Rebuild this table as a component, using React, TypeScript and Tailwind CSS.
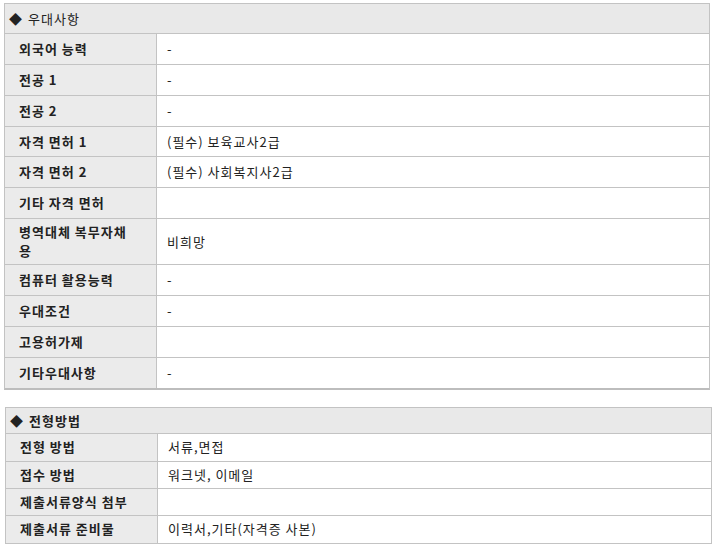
import React from "react";

type Row = { label: React.ReactNode; value: string; h: string };

const prefer: Row[] = [
  { label: "외국어 능력", value: "-", h: "h-[31px]" },
  { label: "전공 1", value: "-", h: "h-[31px]" },
  { label: "전공 2", value: "-", h: "h-[31px]" },
  { label: "자격 면허 1", value: "(필수) 보육교사2급", h: "h-[30px]" },
  { label: "자격 면허 2", value: "(필수) 사회복지사2급", h: "h-[31px]" },
  { label: "기타 자격 면허", value: "", h: "h-[31px]" },
  {
    label: (
      <>
        병역대체 복무자채
        <br />용
      </>
    ),
    value: "비희망",
    h: "h-[46px]",
  },
  { label: "컴퓨터 활용능력", value: "-", h: "h-[31px]" },
  { label: "우대조건", value: "-", h: "h-[31px]" },
  { label: "고용허가제", value: "", h: "h-[31px]" },
  { label: "기타우대사항", value: "-", h: "h-[30px]" },
];

const screening: Row[] = [
  { label: "전형 방법", value: "서류,면접", h: "h-[28px]" },
  { label: "접수 방법", value: "워크넷, 이메일", h: "h-[27px]" },
  { label: "제출서류양식 첨부", value: "", h: "h-[27px]" },
  { label: "제출서류 준비물", value: "이력서,기타(자격증 사본)", h: "h-[27px]" },
];

const App = () => {
  return (
    <div
      className="w-[715px] h-[547px] bg-white text-[13px] leading-[19px] tracking-[1px] text-[#222] overflow-hidden"
      style={{ fontFamily: '"Noto Sans CJK KR", "Noto Sans", sans-serif' }}
    >
      {/* 우대사항 */}
      <div className="pt-[3px] pl-[4px]">
        <div className="w-[706px] border border-[#c3c3c3] border-b-2 border-b-[#bdbdbd]">
          <div className="h-[30px] flex items-center pl-[4px] pb-[1px] bg-[#e9e9e9] border-b border-[#c3c3c3]">
            <span className="mr-[5px]">◆</span>
            <span>우대사항</span>
          </div>
          {prefer.map((r, i) => (
            <div
              key={i}
              className={`flex ${r.h} ${i < prefer.length - 1 ? "border-b border-[#c3c3c3]" : ""}`}
            >
              <div className="w-[152px] shrink-0 flex items-center pl-[14px] pb-[1px] bg-[#ebebeb] border-r border-[#c3c3c3] font-bold">
                <span>{r.label}</span>
              </div>
              <div className="flex-1 flex items-center pl-[10px] pb-[1px]">{r.value}</div>
            </div>
          ))}
        </div>
      </div>

      {/* 전형방법 */}
      <div className="pt-[17px] pl-[5px]">
        <div className="w-[707px] border border-[#c3c3c3]">
          <div className="h-[26px] flex items-center pl-[4px] pb-[1px] bg-[#e9e9e9] border-b border-[#c3c3c3] font-bold">
            <span className="mr-[5px]">◆</span>
            <span>전형방법</span>
          </div>
          {screening.map((r, i) => (
            <div
              key={i}
              className={`flex ${r.h} ${i < screening.length - 1 ? "border-b border-[#c3c3c3]" : ""}`}
            >
              <div className="w-[152px] shrink-0 flex items-center pl-[14px] pb-[2px] bg-[#ebebeb] border-r border-[#c3c3c3] font-bold">
                {r.label}
              </div>
              <div className="flex-1 flex items-center pl-[10px] pb-[2px]">{r.value}</div>
            </div>
          ))}
        </div>
      </div>
    </div>
  );
};

export default App;
